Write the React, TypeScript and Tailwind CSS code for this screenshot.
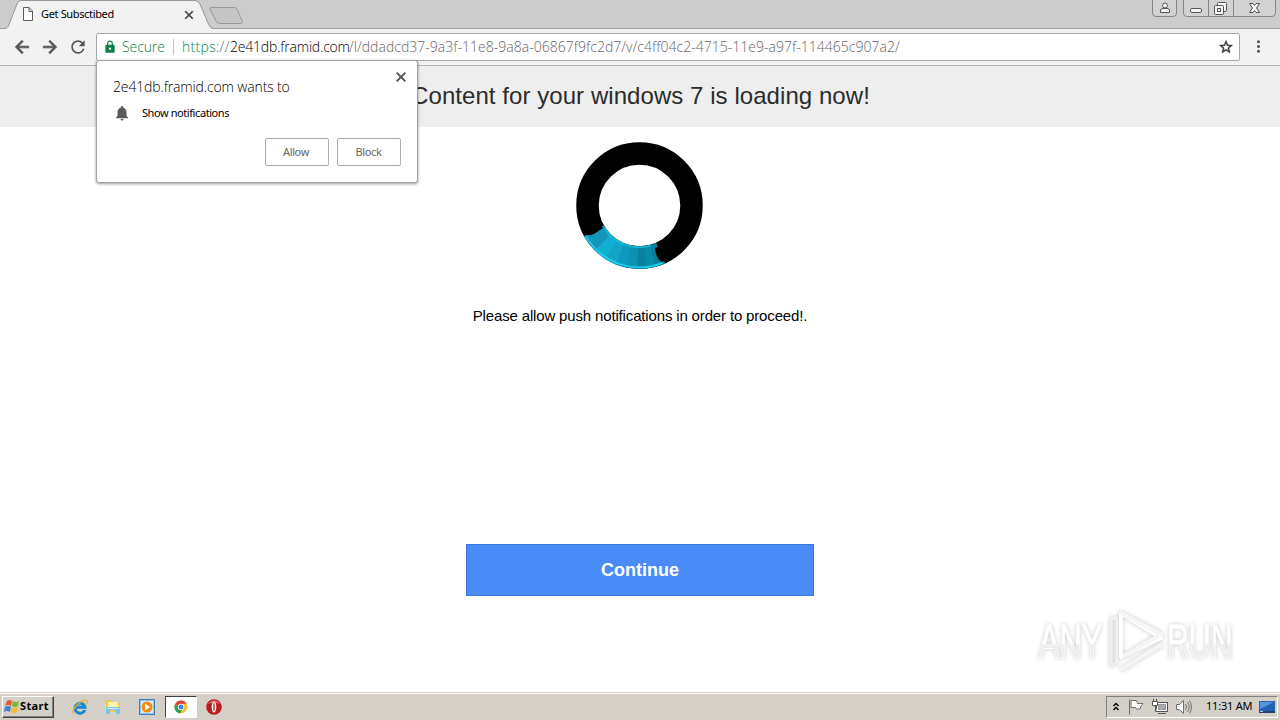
import React from 'react';
import { MdLock, MdNotifications, MdClose, MdArrowBack, MdArrowForward, MdRefresh, MdStarBorder, MdMoreVert } from 'react-icons/md';

const CX = 63.5;
const CY = 63.5;

// Thickens the glyph only; the first path in some icons is an empty frame
const heavy = '[&>path:last-child]:stroke-current [&>path:last-child]:stroke-1';

// Point on the spinner, angle in degrees clockwise from the right
const polar = (r: number, deg: number) => {
  const a = (deg * Math.PI) / 180;
  return `${(CX + r * Math.cos(a)).toFixed(2)} ${(CY + r * Math.sin(a)).toFixed(2)}`;
};

const segment = (inner: number, outer: number, from: number, to: number) =>
  `M${polar(outer, from)}A${outer} ${outer} 0 0 1 ${polar(outer, to)}L${polar(inner, to)}A${inner} ${inner} 0 0 0 ${polar(inner, from)}Z`;

const segments = [
  { from: 66, to: 76, fill: '#087f9d' },
  { from: 75, to: 84, fill: '#098cab' },
  { from: 83, to: 93, fill: '#0a829f' },
  { from: 92, to: 103, fill: '#0c91b3' },
  { from: 102, to: 113, fill: '#0d9abd' },
  { from: 112, to: 124, fill: '#10a5c9' },
  { from: 123, to: 136, fill: '#13aed3' },
  { from: 135, to: 151, fill: '#1496b8' },
];

function Spinner() {
  return (
    <svg className="h-[127px] w-[127px]" viewBox="0 0 127 127">
      <circle cx={CX} cy={CY} r="52" fill="none" stroke="#000" strokeWidth="22.5" />
      {segments.map(s => (
        <path key={s.from} d={segment(40.7, 63.5, s.from, s.to)} fill={s.fill} />
      ))}
      <path d={segment(61, 62.7, 68, 150)} fill="#1dd0ea" />
      <path d={segment(41, 42.5, 74, 147)} fill="#16bcd9" />
      <path d="M79 106q7-4 13 1l8 6-14 7q-6-3-7-14z" fill="#000" />
      <path d="M7 91q8 5 14-1l6-4-8-9-14 8z" fill="#000" />
    </svg>
  );
}

function TabStrip() {
  return (
    <div className="relative flex h-[29px] shrink-0 items-start bg-[#cccccc]">
      <svg className="absolute inset-0 h-[29px] w-full" viewBox="0 0 1280 29">
        <path d="M0 28.5H1280" stroke="#a0a0a0" />
        <path d="M5 29C8 28 9 25 10 22L17 4Q18 .5 21 .5H195Q198 .5 200 4L208 23Q210 28 213 29Z" fill="#f2f2f2" />
        <path d="M5 28.500C8 28 9 25 10 22L17 4Q18 .5 21 .5H195Q198 .5 200 4L208 23Q210 28 213 28.500" fill="none" stroke="#969696" />
        <path d="M212 7.500H234Q236 7.500 237 9L242 21Q243 23.500 241 23.500H220Q217 23.500 216 21L210 9Q209 7.500 212 7.500Z" fill="#c6c6c6" stroke="#999" />
      </svg>
      <div className="relative flex w-[213px] items-center pl-[23px] pt-[7px]">
        <svg className="h-[14px] w-[10px]" viewBox="0 0 10 14" fill="#fff" stroke="#5c5c5c">
          <path d="M.5 .5H6L9.500 4V13.500H.5ZM6 .5V4.500H9.500" />
        </svg>
        <span className="ml-2 text-[11px] leading-[14px] tracking-[-0.35px] text-black">Get Subsctibed</span>
      </div>
      <MdClose className={`absolute left-[182px] top-[8px] h-[14px] w-[14px] text-[#444] ${heavy}`} />
      <svg className="relative ml-auto mr-1 h-[18px] w-[126px]" viewBox="0 0 126 18" fill="none" stroke="#858585">
        <path d="M2.500 0V13Q2.500 16.500 6 16.500H23Q26.500 16.500 26.500 13V0" fill="#d2d2d2" />
        <path d="M33.500 0V13Q33.500 16.500 37 16.500H122Q125.500 16.500 125.500 13V0M58.500 0V16M83.500 0V16" fill="#d2d2d2" />
        <g stroke="#555" fill="#f4f4f4">
          <circle cx="15" cy="5.500" r="2.500" />
          <path d="M10.500 12.500V10Q11 8.500 13 8.500H17Q19 8.500 19.500 10V12.500Z" />
          <rect x="40.500" y="8.500" width="11" height="4" rx="1.500" />
          <rect x="67.500" y="2.500" width="9" height="9" rx="1" />
          <rect x="64.500" y="5.500" width="9" height="9" rx="1" />
          <rect x="67.500" y="8.500" width="3" height="3" />
          <path d="M99.500 3.500H103L104.500 5.500L106 3.500H109.500L106.500 8L109.500 12.500H106L104.500 10.500L103 12.500H99.500L102.500 8Z" />
        </g>
      </svg>
    </div>
  );
}

function Toolbar() {
  return (
    <div className="flex h-[37px] shrink-0 items-center border-b border-[#b5b5b5] bg-[#f2f2f2] pb-px">
      <div className="flex w-24 shrink-0 items-center gap-[8px] pl-[12px] text-[#555]">
        <MdArrowBack className={`h-5 w-5 ${heavy}`} />
        <MdArrowForward className={`h-5 w-5 ${heavy}`} />
        <MdRefresh className="h-5 w-5" />
      </div>
      <div className="flex h-7 w-[1144px] shrink-0 items-center rounded-[2px] border border-[#a8a8a8] bg-white pl-[6px]">
        <MdLock className="h-[14px] w-[14px] text-[#0b8043]" />
        <span className="ml-[5px] w-[43px] whitespace-nowrap font-['Open_Sans'] text-[14px] font-light tracking-[-0.1px] text-[#0b8043]">Secure</span>
        <span className="ml-[8px] h-[16px] w-px bg-[#c4c4c4]" />
        <span className="ml-[8px] flex whitespace-nowrap font-['Open_Sans'] text-[14px] font-light text-[#666]">
          <span className="w-[48px] tracking-[0.3px]"><span className="text-[#0b8043]">https</span>://</span>
          <span className="w-[119px] tracking-[-0.2px] text-black">2e41db.framid.com</span>
          <span className="tracking-[0.02px]">/l/ddadcd37-9a3f-11e8-9a8a-06867f9fc2d7/v/c4ff04c2-4715-11e9-a97f-114465c907a2/</span>
        </span>
        <MdStarBorder className="ml-auto mr-[5px] h-4 w-4 text-[#333] [&>path:last-child]:stroke-current [&>path:last-child]:stroke-[0.6]" />
      </div>
      <MdMoreVert className="ml-[9px] h-[19px] w-[19px] text-[#555]" />
    </div>
  );
}

function PermissionPrompt() {
  return (
    <div className="absolute left-24 top-[60px] flex h-[123px] w-[322px] flex-col rounded-[3px] border border-[#a3a3a3] bg-white px-4 shadow-[0_1px_3px_rgba(0,0,0,0.4)]">
      <MdClose className={`absolute right-[8px] top-[8px] h-[16px] w-[16px] text-[#555] ${heavy}`} />
      <div className="mt-4 whitespace-nowrap font-['Open_Sans'] text-[14px] font-light leading-5 tracking-[-0.14px] text-black">2e41db.framid.com wants to</div>
      <div className="mt-[8px] flex h-4 items-center text-[11px] text-black">
        <MdNotifications className="h-[18px] w-[18px] text-[#5a5a5a]" />
        <span className="ml-[11px] tracking-[-0.42px]">Show notifications</span>
      </div>
      <div className="mt-[17px] flex justify-end gap-2">
        <button className="h-7 w-16 rounded-[2px] border border-[#adadad] pr-[2px] text-[11px] tracking-[-0.4px] text-[#666]">Allow</button>
        <button className="h-7 w-16 rounded-[2px] border border-[#adadad] pr-px text-[11px] tracking-[-0.4px] text-[#666]">Block</button>
      </div>
    </div>
  );
}

function Watermark() {
  return (
    <svg
      className="absolute left-[1030px] top-[602px] h-[76px] w-[240px] drop-shadow-[0_0_2px_rgba(0,0,0,0.22)]"
      viewBox="0 0 240 76"
    >
      <defs>
        <linearGradient id="shine" x1="0" y1="0" x2="0" y2="1">
          <stop offset="0.54" stopColor="#fff" />
          <stop offset="0.55" stopColor="#ececec" />
        </linearGradient>
      </defs>
      <g fill="url(#shine)" fontFamily="Liberation Sans" fontSize="48" stroke="#fff" strokeWidth="0.8">
        <text transform="translate(9 56) scale(0.64 1)">ANY</text>
        <text transform="translate(137 56) scale(0.63 1)">RUN</text>
      </g>
      <g fill="none" strokeLinejoin="round" strokeLinecap="round">
        <path d="M81 17V64L87 60V16Z" stroke="#f0f0f0" strokeWidth="3" />
        <path d="M91 11V55L131 36Z" stroke="#fff" strokeWidth="4" />
        <path d="M91 11L131 32L94 54M92 67L131 43" stroke="#f5f5f5" strokeWidth="4" />
      </g>
    </svg>
  );
}

function FlagLogo() {
  return (
    <svg className="h-4 w-4" viewBox="0 0 16 16">
      <path d="M3 2Q6 0 8 2L7 7Q4 5 1 7Z" fill="#e9562b" />
      <path d="M9 2Q12 4 15 2L14 7Q11 9 8 7Z" fill="#79b83b" />
      <path d="M1 8Q4 6 7 8L6 13Q3 11 0 13Z" fill="#3e82cf" />
      <path d="M8 8Q11 10 14 8L13 13Q10 15 7 13Z" fill="#f4b92d" />
    </svg>
  );
}

function Taskbar() {
  return (
    <div className="flex h-[28px] shrink-0 items-center border-t border-[#d4d0c8] bg-[#d4d0c8] shadow-[inset_0_1px_0_#fff]">
      <div className="ml-[2px] flex h-[22px] w-[52px] items-center border border-b-[#404040] border-l-white border-r-[#404040] border-t-white pl-px shadow-[inset_-1px_-1px_0_#808080]">
        <FlagLogo />
        <span className="text-[11px] font-bold tracking-[0.35px]">Start</span>
      </div>
      <svg className="ml-[18px] h-4 w-4" viewBox="0 0 16 16" fill="none">
        <path d="M12.800 11A5 5 0 1 1 13 8.300H4" stroke="#1788d1" strokeWidth="3" />
        <path d="M2 14.500Q-1 12 5 6Q12 0 15 1.500Q16 3 14 6" stroke="#e6b32f" strokeWidth="1.300" />
      </svg>
      <svg className="ml-[17px] h-4 w-4" viewBox="0 0 16 16">
        <path d="M1 1H6L7 3H14V13H1Z" fill="#e9c95e" />
        <path d="M3 3H13V8H3Z" fill="#fff3a7" />
        <path d="M1 8H15V15H11V11H5V15H1Z" fill="#7ec5e5" />
        <path d="M2 9H14V10H2Z" fill="#c5ecf7" />
      </svg>
      <svg className="ml-[18px] h-4 w-4" viewBox="0 0 16 16">
        <rect x=".5" y=".5" width="15" height="15" fill="#8fc1e9" stroke="#3f7fb8" />
        <rect x="2" y="2" width="12" height="12" fill="#d9edf9" />
        <circle cx="8" cy="8" r="5.500" fill="#f28c18" />
        <path d="M6 4.500L11 8L6 11.500Z" fill="#fff" />
      </svg>
      <div className="ml-[10px] flex h-[22px] w-8 items-center justify-center border border-b-white border-l-[#404040] border-r-white border-t-[#404040] bg-white">
        <svg className="h-[14px] w-[14px]" viewBox="0 0 14 14">
          <circle cx="7" cy="7" r="6.500" fill="#f4c431" />
          <path d="M1.300 3.800A6.500 6.500 0 0 1 12.700 3.800L7 4L4.500 9Z" fill="#dc4437" />
          <path d="M1.300 3.800L4.500 9L8 10L6 13.500A6.500 6.500 0 0 1 1.300 3.800Z" fill="#2ca05a" />
          <circle cx="7" cy="7" r="3.200" fill="#fff" />
          <circle cx="7" cy="7" r="2.500" fill="#4285e8" />
        </svg>
      </div>
      <svg className="ml-[9px] h-4 w-4" viewBox="0 0 16 16">
        <circle cx="8" cy="8" r="7.800" fill="#b81e20" />
        <path d="M2 5A7 7 0 0 1 14 5Q8 2 2 5Z" fill="#df6b6b" />
        <ellipse cx="8" cy="8" rx="2.300" ry="5.500" fill="#fff" />
        <ellipse cx="8" cy="8" rx=".7" ry="4.500" fill="#b81e20" />
      </svg>
      <div className="ml-auto mr-[2px] flex h-[22px] w-[172px] items-center border border-b-white border-l-[#808080] border-r-white border-t-[#808080]">
        <svg className="ml-[5px] h-[10px] w-[8px]" viewBox="0 0 8 10" fill="none" stroke="#000" strokeWidth="1.400">
          <path d="M1.500 4L4 1.500L6.500 4M1.500 8L4 5.500L6.500 8" />
        </svg>
        <svg className="ml-[8px] h-4 w-4" viewBox="0 0 16 16" fill="#fff" stroke="#707070">
          <path d="M1.500 .5V15.500M3 1.500H8.500L9.500 4.500H15L13 7L12 10H8.500L7.500 8.500H3Z" />
        </svg>
        <svg className="ml-[8px] h-4 w-4" viewBox="0 0 16 16" fill="#fff" stroke="#555">
          <rect x="4.500" y="3.500" width="11" height="9" />
          <rect x="6.500" y="5.500" width="7" height="5" fill="#aaa" stroke="#999" />
          <path d="M6 14.500H14M.5 2.500H5.500V6.500H.5ZM1.500 0V2M4.500 0V2M3.500 7V12.500H5" />
        </svg>
        <svg className="ml-[8px] h-4 w-4" viewBox="0 0 16 16" fill="#fff" stroke="#707070">
          <path d="M.5 5.500H3.500L7.500 1.500V14.500L3.500 10.500H.5Z" />
          <path d="M9.500 5Q11.500 8 9.500 11M11.500 3Q15 8 11.500 13M13.500 1.500Q17.500 8 13.500 14.500" fill="none" />
        </svg>
        <span className="ml-[14px] w-[46px] whitespace-nowrap text-[11px] tracking-[-0.2px]">11:31 AM</span>
        <svg className="ml-[7px] h-[14px] w-4" viewBox="0 0 16 14">
          <path d="M0 1H16V11H0Z" fill="#2462b4" />
          <path d="M1 2H15L1 9Z" fill="#5594dc" />
          <path d="M0 11H16V13H0Z" fill="#263e68" />
          <path d="M1 11H4V12H1Z" fill="#a8d8ed" />
        </svg>
      </div>
    </div>
  );
}

export default function App() {
  return (
    <div className="relative flex h-[720px] w-[1280px] flex-col overflow-hidden bg-white font-['Noto_Sans','Open_Sans',sans-serif]">
      <TabStrip />
      <Toolbar />
      <main className="flex flex-1 flex-col items-center bg-white font-['Liberation_Sans',Arial,sans-serif]">
        <h1 className="flex h-[61px] w-full items-center justify-center bg-[#eeeeee] pb-[2px] pl-px text-[24px] tracking-[0.06px] text-[#2b2b2b]">
          Content for your windows 7 is loading now!
        </h1>
        <div className="mt-[15px] flex h-[129px] w-full justify-center pr-px">
          <Spinner />
        </div>
        <p className="mt-[35px] text-[15px] leading-5 tracking-[-0.155px] text-black">Please allow push notifications in order to proceed!.</p>
        <button className="mt-[218px] h-[52px] w-[348px] border border-[#3b78d8] bg-[#4a8cf7] text-[18px] font-bold text-white">
          Continue
        </button>
      </main>
      <Taskbar />
      <Watermark />
      <PermissionPrompt />
    </div>
  );
}
